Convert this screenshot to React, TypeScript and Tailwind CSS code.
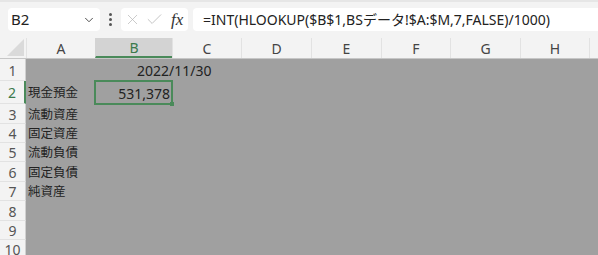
import { ChevronDown, X, Check } from "lucide-react";

const cols = [
  { name: "A", w: "w-[69px]" },
  { name: "B", w: "w-[77px]" },
  { name: "C", w: "w-[69px]" },
  { name: "D", w: "w-[70px]" },
  { name: "E", w: "w-[70px]" },
  { name: "F", w: "w-[69px]" },
  { name: "G", w: "w-[70px]" },
  { name: "H", w: "w-[69px]" },
];

const rows = [
  { n: 1, h: "h-[22px]", a: "", b: "2022/11/30" },
  { n: 2, h: "h-[23px]", a: "現金預金", b: "531,378" },
  { n: 3, h: "h-[20px]", a: "流動資産", b: "" },
  { n: 4, h: "h-[19px]", a: "固定資産", b: "" },
  { n: 5, h: "h-[19px]", a: "流動負債", b: "" },
  { n: 6, h: "h-[20px]", a: "固定負債", b: "" },
  { n: 7, h: "h-[19px]", a: "純資産", b: "" },
  { n: 8, h: "h-[20px]", a: "", b: "" },
  { n: 9, h: "h-[19px]", a: "", b: "" },
  { n: 10, h: "h-[19px]", a: "", b: "" },
];

const font = "font-['Noto_Sans','Noto_Sans_CJK_JP',sans-serif]";

export default function App() {
  return (
    <div className={`w-[598px] h-[255px] overflow-hidden bg-[#f3f3f3] text-[#222] ${font}`}>
      {/* 数式バー */}
      <div className="h-[38px] border-t-[2px] border-[#e6e6e6] flex items-start pt-[6px] pl-[8px]">
        <div className="w-[92px] h-[23px] bg-white rounded-[4px] flex items-center justify-between pl-[3px] pr-[4px]">
          <span className="text-[15px] leading-none">B2</span>
          <ChevronDown size={14} strokeWidth={1.6} className="text-[#444]" />
        </div>
        <div className="w-[21px] h-[23px] flex flex-col items-center justify-center gap-[2px]">
          <span className="w-[3px] h-[3px] rounded-full bg-[#555]" />
          <span className="w-[3px] h-[3px] rounded-full bg-[#555]" />
          <span className="w-[3px] h-[3px] rounded-full bg-[#555]" />
        </div>
        <div className="w-[67px] h-[23px] bg-white rounded-[4px] flex items-center pl-[3px] gap-[4px]">
          <X size={17} strokeWidth={1} className="text-[#b5b5b5]" />
          <Check size={19} strokeWidth={1} className="text-[#b5b5b5]" />
          <span className="font-['Liberation_Serif',serif] italic text-[17px] leading-none text-[#333] ml-[3px]">fx</span>
        </div>
        <div className="flex-1 ml-[5px] h-[23px] bg-white rounded-l-[4px] flex items-center pl-[10px] text-[14px] whitespace-nowrap">
          =INT(HLOOKUP($B$1,BSデータ!$A:$M,7,FALSE)/1000)
        </div>
      </div>

      {/* 列見出し */}
      <div className="flex h-[21px] border-b border-[#c6c6c6]">
        <div className="w-[26px] relative">
          <div className="absolute right-[2px] bottom-[2px] w-0 h-0 border-l-[17px] border-l-transparent border-b-[17px] border-b-[#dadada]" />
        </div>
        {cols.map((c) => (
          <div
            key={c.name}
            className={`${c.w} shrink-0 flex items-center justify-center text-[14px] border-l ${
              c.name === "B"
                ? "bg-[#d3d3d3] text-[#3b7a4c] border-b-[2px] border-b-[#4a8a5a] border-l-[#d3d3d3]"
                : "text-[#444] border-l-[#e2e2e2]"
            }`}
          >
            {c.name}
          </div>
        ))}
        <div className="flex-1 border-l border-[#e2e2e2]" />
      </div>

      {/* シート */}
      {rows.map((r) => (
        <div key={r.n} className={`flex ${r.h}`}>
          <div
            className={`w-[26px] shrink-0 flex items-center justify-center pt-[2px] text-[14px] leading-none border-b border-[#e2e2e2] ${
              r.n === 2 ? "text-[#3b7a4c] border-r-[2px] border-r-[#4a8a5a]" : "text-[#555] border-r border-r-[#d0d0d0]"
            }`}
          >
            {r.n}
          </div>
          <div className="flex-1 flex bg-[#a0a0a0]">
            <div className="w-[69px] shrink-0 flex items-center pl-[2px] pt-[2px] text-[12.5px]">{r.a}</div>
            <div className="w-[77px] shrink-0 relative flex items-center text-[14px]">
              {r.n === 1 && (
                <span className="absolute left-[42px] whitespace-nowrap">{r.b}</span>
              )}
              {r.n === 2 && (
                <div className="absolute -left-[1px] -top-[1px] w-[79px] h-[25px] border-[2px] border-[#4a8a5a] flex items-center justify-end pr-[1px] pt-[1px]">
                  {r.b}
                  <span className="absolute -right-[3px] -bottom-[3px] w-[4px] h-[4px] bg-[#4a8a5a]" />
                </div>
              )}
            </div>
            <div className="flex-1" />
          </div>
        </div>
      ))}
    </div>
  );
}
